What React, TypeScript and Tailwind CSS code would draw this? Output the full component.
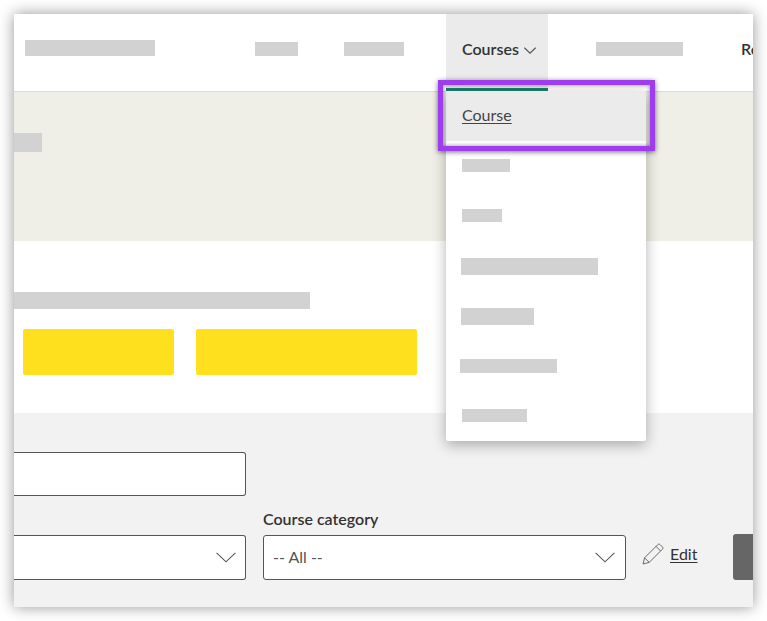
const LATO = "font-['Lato','Liberation_Sans',sans-serif]";

const MENU_BARS = [
  { width: 'w-[48px]', height: 'h-[13px]', left: 'ml-[16px]', nudge: 'pb-[1px]' },
  { width: 'w-[40px]', height: 'h-[13px]', left: 'ml-[16px]', nudge: 'pb-[1px]' },
  { width: 'w-[137px]', height: 'h-[17px]', left: 'ml-[15px]', nudge: '' },
  { width: 'w-[73px]', height: 'h-[17px]', left: 'ml-[15px]', nudge: '' },
  { width: 'w-[97px]', height: 'h-[14px]', left: 'ml-[14px]', nudge: 'pb-[1px]' },
  { width: 'w-[65px]', height: 'h-[13px]', left: 'ml-[16px]', nudge: 'pb-[1px]' },
];

function Chevron({ className, weight = 1.1 }: { className: string; weight?: number }) {
  return (
    <svg className={className} viewBox="0 0 20 11" fill="none" stroke="#555" strokeWidth={weight}>
      <path d="M0.6 0.8L10 9.8L19.4 0.8" />
    </svg>
  );
}

function Pencil() {
  return (
    <svg width="22" height="22" viewBox="0 0 22 22" fill="none" stroke="#6a6a6a" strokeWidth="1">
      <path d="M1 21l1.6-6.2L15.8 1.6c.7-.7 1.6-.7 2.2-.1l2.5 2.5c.6.6.6 1.5-.1 2.2L7.2 19.4 1 21z" />
      <path d="M2.6 14.8l4.6 4.6M14 3.4l4.6 4.6" />
    </svg>
  );
}

export default function App() {
  return (
    <div className={`${LATO} h-[621px] w-[767px] overflow-hidden bg-white px-[14px] pt-[14px] text-[#333]`}>
      <div className="relative h-[593px] w-[739px] shadow-[0_0_14px_rgba(0,0,0,0.42)]">
        <div className="flex h-full flex-col overflow-hidden bg-white">
          {/* top nav */}
          <header className="flex h-[78px] shrink-0 overflow-hidden border-b border-[#d9d9d9] whitespace-nowrap">
            <div className="ml-[11px] mt-[26px] h-[16px] w-[130px] shrink-0 bg-[#d2d2d2]" />
            <div className="ml-[100px] mt-[28px] h-[14px] w-[43px] shrink-0 bg-[#d2d2d2]" />
            <div className="ml-[46px] mt-[28px] h-[14px] w-[60px] shrink-0 bg-[#d2d2d2]" />
            <div className="ml-[42px] flex h-[77px] w-[102px] shrink-0 items-start gap-[5px] border-b-[3px] border-[#1b7f6e] bg-[#ebebeb] pl-[16px] pt-[25px] text-[16px] font-semibold leading-[20px]">
              Courses
              <Chevron className="mt-[8px] h-[7px] w-[12px]" weight={2} />
            </div>
            <div className="ml-[48px] mt-[28px] h-[14px] w-[87px] shrink-0 bg-[#d2d2d2]" />
            <div className="ml-[58px] mt-[25px] shrink-0 text-[16px] font-semibold leading-[20px]">Re</div>
          </header>

          {/* banner */}
          <div className="h-[149px] shrink-0 bg-[#efefe7] pt-[41px]">
            <div className="h-[19px] w-[28px] bg-[#d2d2d2]" />
          </div>

          {/* title and actions */}
          <div className="h-[172px] shrink-0 pt-[51px]">
            <div className="h-[17px] w-[296px] bg-[#d2d2d2]" />
            <div className="ml-[9px] mt-[20px] flex gap-[22px]">
              <div className="h-[46px] w-[151px] rounded-[2px] bg-[#ffe01e]" />
              <div className="h-[46px] w-[221px] rounded-[2px] bg-[#ffe01e]" />
            </div>
          </div>

          {/* filters */}
          <div className="flex-1 bg-[#f2f2f2] pt-[39px]">
            <div className="h-[44px] w-[232px] rounded-r-[3px] border border-l-0 border-[#555] bg-white" />
            <div className="mt-[14px] flex items-end">
              <div className="flex h-[45px] w-[232px] shrink-0 items-center justify-end rounded-r-[3px] border border-l-0 border-[#555] bg-white pr-[9px]">
                <Chevron className="h-[11px] w-[20px]" />
              </div>
              <div className="ml-[17px] w-[363px] shrink-0">
                <div className="mb-[7px] text-[16px] font-semibold leading-[18px]">Course category</div>
                <div className="flex h-[45px] items-center justify-between rounded-[3px] border border-[#555] bg-white pb-[1px] pl-[9px] pr-[10px] text-[16px] text-[#555]">
                  -- All --
                  <Chevron className="h-[11px] w-[20px]" />
                </div>
              </div>
              <div className="mb-[15px] ml-[16px] flex shrink-0 items-center gap-[6px]">
                <Pencil />
                <span className="text-[16px] leading-[20px] underline underline-offset-2">Edit</span>
              </div>
              <div className="ml-[36px] h-[46px] w-[20px] shrink-0 rounded-l-[3px] bg-[#666]" />
            </div>
          </div>
        </div>

        {/* open dropdown */}
        <div className="absolute left-[432px] top-[77px] h-[350px] w-[200px] rounded-b-[2px] bg-white shadow-[0_4px_14px_rgba(0,0,0,0.3)]">
          <div className="flex h-[50px] items-center bg-[#ebebeb] pb-[3px] pl-[16px] text-[16px] text-[#444] underline underline-offset-2">
            Course
          </div>
          {MENU_BARS.map((bar, i) => (
            <div key={i} className={`flex h-[50px] items-center ${bar.nudge}`}>
              <div className={`${bar.width} ${bar.height} ${bar.left} bg-[#d2d2d2]`} />
            </div>
          ))}
        </div>

        {/* highlight callout */}
        <div className="absolute left-[424px] top-[66px] h-[71px] w-[217px] border-[5px] border-[#a03cf0] shadow-[0_1px_5px_rgba(0,0,0,0.55),inset_0_0_4px_rgba(0,0,0,0.45)]" />
      </div>
    </div>
  );
}
